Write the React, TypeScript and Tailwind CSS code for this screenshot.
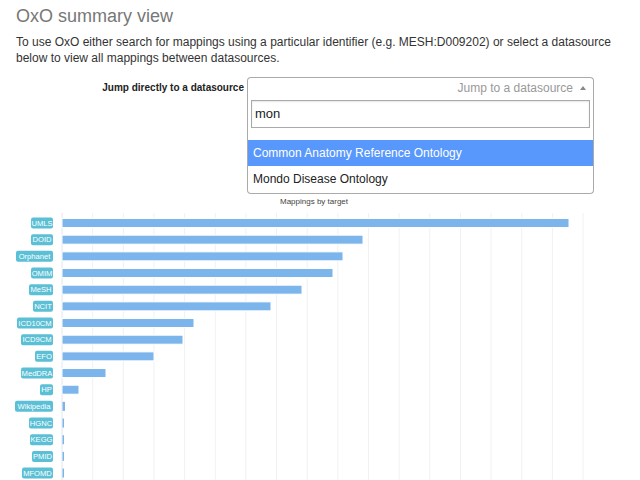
import React from "react";

const rows: { label: string; end: number }[] = [
  { label: "UMLS", end: 569 },
  { label: "DOID", end: 363 },
  { label: "Orphanet", end: 343 },
  { label: "OMIM", end: 333 },
  { label: "MeSH", end: 302 },
  { label: "NCIT", end: 271 },
  { label: "ICD10CM", end: 194 },
  { label: "ICD9CM", end: 183 },
  { label: "EFO", end: 154 },
  { label: "MedDRA", end: 106 },
  { label: "HP", end: 79 },
  { label: "Wikipedia", end: 65 },
  { label: "HGNC", end: 64 },
  { label: "KEGG", end: 64 },
  { label: "PMID", end: 64 },
  { label: "MFOMD", end: 64 },
];

const labelWidths: Record<string, number> = {
  UMLS: 22,
  DOID: 22,
  Orphanet: 37,
  OMIM: 22,
  MeSH: 24,
  NCIT: 20,
  ICD10CM: 36,
  ICD9CM: 32,
  EFO: 18,
  MedDRA: 32,
  HP: 13,
  Wikipedia: 38,
  HGNC: 24,
  KEGG: 23,
  PMID: 21,
  MFOMD: 31,
};

function Chart() {
  const top = 190;
  const grid: number[] = [];
  for (let i = 0; i <= 17; i++) grid.push(62 + i * 30.65);
  return (
    <svg width={640} height={290} className="block">
      <text x={314} y={203 - top} textAnchor="middle" fontSize={8} fill="#444" fontFamily="'Liberation Sans', Arial, sans-serif">
        Mappings by target
      </text>
      {grid.map((x, i) => (
        <line key={i} x1={x} x2={x} y1={212 - top} y2={290} stroke={i === 0 ? "#e3e6ec" : "#f1f1f1"} strokeWidth={1} />
      ))}
      {rows.map((r, i) => {
        const cy = 222 - top + i * 16.67;
        const w = labelWidths[r.label];
        const small = r.end - 62 < 5;
        return (
          <g key={r.label}>
            <rect x={53 - w} y={cy - 5.5} width={w} height={11} rx={2} fill="#5bc0d5" />
            <text x={53 - w / 2} y={cy + 2.7} textAnchor="middle" fontSize={7.6} fill="#fff" fontFamily="'Liberation Sans', Arial, sans-serif">
              {r.label}
            </text>
            <rect
              x={small ? 62.5 : 62}
              y={cy - 4.5}
              width={small ? r.end - 62.5 : r.end - 62}
              height={9}
              fill="#7cb5ec"
              stroke={small ? "none" : "#ffffff"}
              strokeWidth={1}
            />
          </g>
        );
      })}
    </svg>
  );
}

export default function App() {
  return (
    <div className="relative w-[640px] h-[480px] overflow-hidden bg-white font-['Liberation_Sans',Arial,sans-serif] text-[#333]">
      <div className="px-4 pt-[4px]">
        <h2 className="text-[18px] leading-[24px] text-[#777]">OxO summary view</h2>
        <p className="mt-[6px] text-[12px] leading-[16px] text-[#333]">
          To use OxO either search for mappings using a particular identifier (e.g. MESH:D009202) or select a datasource below to view all mappings between datasources.
        </p>
        <div className="flex items-start mt-[11px]">
          <div className="w-[231px] pr-[3px] text-right font-bold text-[10px] leading-[21px] text-[#222]">
            Jump directly to a datasource
          </div>
          <div className="relative w-[347px]">
            <div className="h-[21px] border border-[#aaa] rounded-t-[4px] border-b-[#ddd] flex items-center justify-end pr-[6px] text-[12px] text-[#999]">
              <span>Jump to a datasource</span>
              <svg width="8" height="6" viewBox="0 0 8 6" className="ml-[6px]">
                <polygon points="4,1 7,5 1,5" fill="#888" />
              </svg>
            </div>
            <div className="absolute left-0 top-[20px] w-[347px] h-[97px] border border-[#aaa] border-t-0 rounded-b-[4px] bg-white">
              <div className="px-[3px] pt-[3px]">
                <div className="h-[28px] border border-[#aaa] flex items-center pl-[3px] text-[13px] text-[#222] shadow-[inset_0_1px_2px_rgba(0,0,0,0.1)]">
                  mon
                </div>
              </div>
              <div className="mt-[12px]">
                <div className="h-[26px] bg-[#5897fb] text-white text-[12px] flex items-center pl-[5px]">
                  Common Anatomy Reference Ontology
                </div>
                <div className="h-[25px] text-[#222] text-[12px] flex items-center pl-[5px]">
                  Mondo Disease Ontology
                </div>
              </div>
            </div>
          </div>
        </div>
      </div>
      <div className="mt-[93px]">
        <Chart />
      </div>
    </div>
  );
}
